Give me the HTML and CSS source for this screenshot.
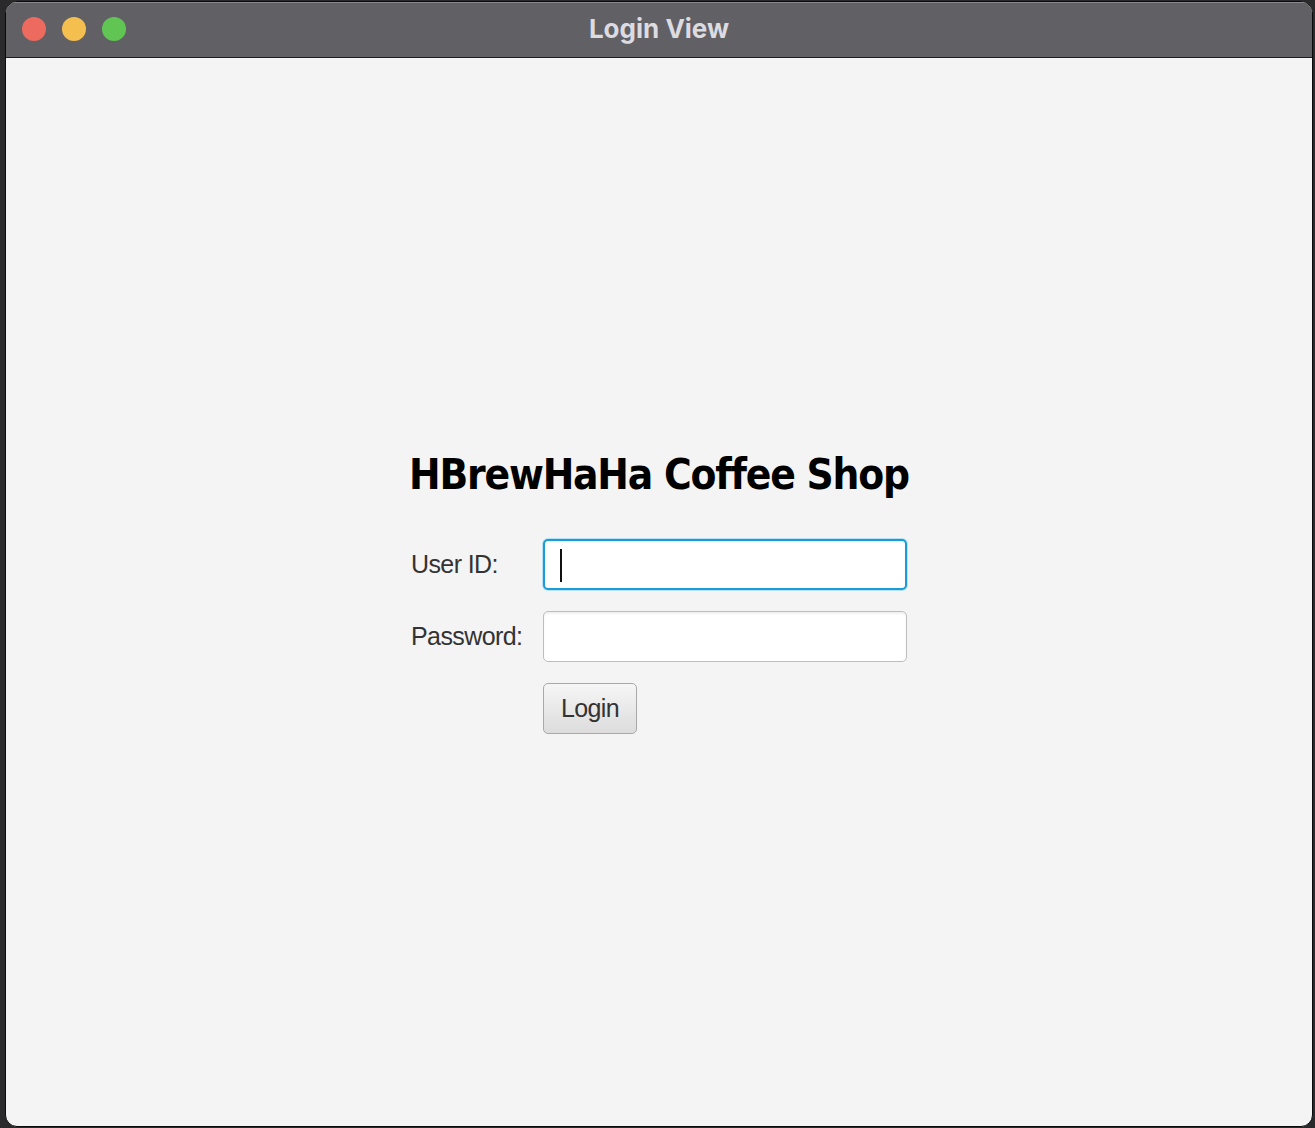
FILE: index.html
```html
<!DOCTYPE html>
<html>
<head>
<meta charset="utf-8">
<link rel="stylesheet" href="styles.css">
</head>
<body>
<div class="window">
  <div class="titlebar">
    <div class="lights">
      <span class="light red"></span>
      <span class="light yellow"></span>
      <span class="light green"></span>
    </div>
    <div class="wtitle">Login View</div>
  </div>
  <div class="content">
    <div class="form">
      <div class="heading">HBrewHaHa Coffee Shop</div>
      <div class="grid">
        <label class="lbl">User ID:</label>
        <div class="field focused"><span class="caret"></span></div>
        <label class="lbl">Password:</label>
        <div class="field"></div>
        <div></div>
        <div><button class="btn">Login</button></div>
      </div>
    </div>
  </div>
</div>
</body>
</html>
```

FILE: styles.css
```css
html, body {
  margin: 0;
  padding: 0;
  height: 100%;
}
body {
  background: #2a2a2c;
  padding: 1px 2px 1px 5px;
  box-sizing: border-box;
}
.window {
  height: 1126px;
  width: 1308px;
  border: 1px solid #0a0a0a;
  border-radius: 12px;
  overflow: hidden;
  display: flex;
  flex-direction: column;
  box-sizing: border-box;
  background: #f4f4f4;
}
.titlebar {
  height: 55px;
  flex: none;
  background: #616065;
  border-bottom: 1px solid #1e1e20;
  box-shadow: inset 0 1px 0 #8a898e;
  display: flex;
  align-items: center;
  justify-content: center;
  position: relative;
}
.lights {
  position: absolute;
  left: 16px;
  top: 15px;
  display: flex;
  gap: 16px;
}
.light {
  width: 24px;
  height: 24px;
  border-radius: 50%;
  display: block;
}
.red { background: #ec6a5e; }
.yellow { background: #f4bf4f; }
.green { background: #61c554; }
.wtitle {
  font-family: "Inter", "Liberation Sans", sans-serif;
  font-weight: 700;
  font-size: 26px;
  color: #dcdbe0;
  margin-top: -3px;
}
.content {
  flex: 1;
  display: flex;
  align-items: center;
  justify-content: center;
}
.form {
  display: flex;
  flex-direction: column;
  align-items: center;
  margin-top: -5px;
}
.heading {
  font-family: "DejaVu Sans Condensed", "DejaVu Sans", sans-serif;
  font-weight: 700;
  font-size: 42px;
  letter-spacing: -1.2px;
  line-height: 57px;
  color: #000;
  font-variant-ligatures: none;
}
.grid {
  margin-top: 36px;
  display: grid;
  grid-template-columns: 132px 364px;
  grid-auto-rows: 51px;
  row-gap: 21px;
  align-items: center;
}
.lbl {
  font-family: "Liberation Sans", sans-serif;
  font-size: 25px;
  letter-spacing: -0.6px;
  color: #333;
}
.field {
  height: 51px;
  box-sizing: border-box;
  border: 1px solid #bdbdbd;
  border-radius: 5px;
  background: #fff;
  box-shadow: inset 0 2px 2px rgba(0,0,0,0.06);
  position: relative;
}
.field.focused {
  border: 2px solid #1c9cd6;
  box-shadow: 0 0 0 1px #b6e0f3, inset 0 2px 2px rgba(0,0,0,0.04);
}
.caret {
  position: absolute;
  left: 15px;
  top: 8px;
  width: 2px;
  height: 33px;
  background: #111;
}
.btn {
  height: 51px;
  width: 94px;
  box-sizing: border-box;
  border: 1px solid #a9a9a9;
  border-radius: 5px;
  background: linear-gradient(#f6f6f6, #dcdcdc);
  font-family: "Liberation Sans", sans-serif;
  font-size: 25px;
  letter-spacing: -0.6px;
  color: #333;
  padding: 0;
  display: block;
}
```
